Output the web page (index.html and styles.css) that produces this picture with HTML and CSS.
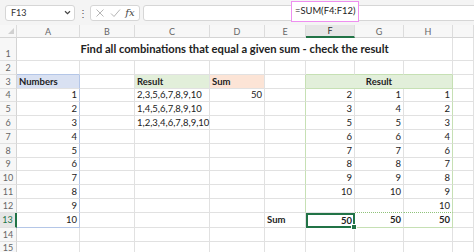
FILE: index.html
```html
<!DOCTYPE html>
<html lang="en">
<head>
  <meta charset="UTF-8">
  <title>Find all combinations that equal a given sum</title>
  <link rel="stylesheet" href="styles.css">
</head>
<body>
  <div class="formula-bar">
    <div class="name-box">
      <span>F13</span>
      <svg class="chevron" width="7" height="5" viewBox="0 0 7 5"><path d="M1 1.2 L3.5 3.6 L6 1.2" fill="none" stroke="#444" stroke-width="1.2"/></svg>
    </div>
    <div class="dots">⋮</div>
    <div class="fx-buttons">
      <svg width="10" height="10" viewBox="0 0 10 10"><path d="M1.5 1.5 L8.5 8.5 M8.5 1.5 L1.5 8.5" stroke="#b5b5b5" stroke-width="1"/></svg>
      <svg width="11" height="10" viewBox="0 0 11 10"><path d="M1 5.5 L4 8.5 L10 1.5" fill="none" stroke="#b5b5b5" stroke-width="1"/></svg>
      <span class="fx">fx</span>
    </div>
    <div class="formula-input">
      <span class="formula">=SUM(F4:F12)</span>
    </div>
  </div>

  <table class="sheet">
    <colgroup>
      <col class="c-hdr"><col class="c-a"><col class="c-b"><col class="c-c"><col class="c-d">
      <col class="c-e"><col class="c-f"><col class="c-g"><col class="c-h"><col class="c-i">
    </colgroup>
    <tr class="col-heads">
      <th class="corner"><svg width="8" height="8" viewBox="0 0 8 8"><path d="M7 1 L7 7 L1 7 Z" fill="#d0d0d0"/></svg></th>
      <th>A</th><th>B</th><th>C</th><th>D</th><th>E</th><th class="active">F</th><th>G</th><th>H</th><th></th>
    </tr>
    <tr class="r-title">
      <th class="rh">1</th>
      <td colspan="8" class="title">Find all combinations that equal a given sum - check the result</td>
      <td></td>
    </tr>
    <tr>
      <th class="rh">2</th>
      <td class="above-num"></td><td></td><td></td><td></td><td></td><td class="above-res"></td><td class="above-res"></td><td class="above-res"></td><td></td>
    </tr>
    <tr>
      <th class="rh">3</th>
      <td class="num head-blue">Numbers</td><td></td>
      <td class="head-green">Result</td><td class="head-peach">Sum</td><td class="before-res"></td>
      <td colspan="3" class="res-head">Result</td><td></td>
    </tr>
    <tr>
      <th class="rh">4</th>
      <td class="num r">1</td><td></td><td>2,3,5,6,7,8,9,10</td><td class="r">50</td><td class="before-res"></td>
      <td class="r res-l">2</td><td class="r">1</td><td class="r res-r">1</td><td></td>
    </tr>
    <tr>
      <th class="rh">5</th>
      <td class="num r">2</td><td></td><td>1,4,5,6,7,8,9,10</td><td></td><td class="before-res"></td>
      <td class="r res-l">3</td><td class="r">4</td><td class="r res-r">2</td><td></td>
    </tr>
    <tr>
      <th class="rh">6</th>
      <td class="num r">3</td><td></td><td>1,2,3,4,6,7,8,9,10</td><td></td><td class="before-res"></td>
      <td class="r res-l">5</td><td class="r">5</td><td class="r res-r">3</td><td></td>
    </tr>
    <tr>
      <th class="rh">7</th>
      <td class="num r">4</td><td></td><td></td><td></td><td class="before-res"></td>
      <td class="r res-l">6</td><td class="r">6</td><td class="r res-r">4</td><td></td>
    </tr>
    <tr>
      <th class="rh">8</th>
      <td class="num r">5</td><td></td><td></td><td></td><td class="before-res"></td>
      <td class="r res-l">7</td><td class="r">7</td><td class="r res-r">6</td><td></td>
    </tr>
    <tr>
      <th class="rh">9</th>
      <td class="num r">6</td><td></td><td></td><td></td><td class="before-res"></td>
      <td class="r res-l">8</td><td class="r">8</td><td class="r res-r">7</td><td></td>
    </tr>
    <tr>
      <th class="rh">10</th>
      <td class="num r">7</td><td></td><td></td><td></td><td class="before-res"></td>
      <td class="r res-l">9</td><td class="r">9</td><td class="r res-r">8</td><td></td>
    </tr>
    <tr>
      <th class="rh">11</th>
      <td class="num r">8</td><td></td><td></td><td></td><td class="before-res"></td>
      <td class="r res-l">10</td><td class="r">10</td><td class="r res-r">9</td><td></td>
    </tr>
    <tr>
      <th class="rh">12</th>
      <td class="num r">9</td><td></td><td></td><td></td><td class="before-res"></td>
      <td class="res-l"></td><td class="dotted-b"></td><td class="r res-r dotted-b">10</td><td></td>
    </tr>
    <tr>
      <th class="rh active">13</th>
      <td class="num num-last r">10</td><td></td><td></td><td></td><td class="b">Sum</td>
      <td class="r b selected">50<span class="handle"></span></td><td class="r b res-last">50</td><td class="r b res-r res-last">50</td><td></td>
    </tr>
    <tr>
      <th class="rh">14</th>
      <td></td><td></td><td></td><td></td><td></td><td></td><td></td><td></td><td></td>
    </tr>
    <tr>
      <th class="rh">15</th>
      <td></td><td></td><td></td><td></td><td></td><td></td><td></td><td></td><td></td>
    </tr>
  </table>
</body>
</html>
```

FILE: styles.css
```css
body {
  margin: 0;
  width: 474px;
  height: 252px;
  overflow: hidden;
  background: white;
  font-family: Lato, 'Liberation Sans', sans-serif;
  color: #222;
}

/* formula bar */

.formula-bar {
  height: 25px;
  background: #f4f4f4;
  display: flex;
  align-items: center;
  padding-left: 5px;
  box-sizing: border-box;
}

.name-box {
  width: 70px;
  height: 16px;
  box-sizing: border-box;
  background: white;
  border: 1px solid #d6d6d6;
  border-radius: 3px;
  display: flex;
  align-items: center;
  justify-content: space-between;
  padding: 0 3px 0 5px;
  font-size: 9px;
  color: #333;
}

.dots {
  width: 15px;
  text-align: center;
  font-size: 10px;
  color: #555;
}

.fx-buttons {
  width: 50px;
  height: 16px;
  box-sizing: border-box;
  background: white;
  border: 1px solid #d6d6d6;
  border-radius: 3px;
  display: flex;
  align-items: center;
  justify-content: space-around;
  padding: 0 2px;
}

.fx {
  font-family: 'DejaVu Serif', 'Liberation Serif', serif;
  font-style: italic;
  font-size: 10px;
  color: #444;
}

.formula-input {
  flex: 1;
  margin-left: 3px;
  margin-right: -6px;
  height: 16px;
  box-sizing: border-box;
  background: white;
  border: 1px solid #d6d6d6;
  border-radius: 3px;
  position: relative;
}

/* annotation drawn over the formula bar */
.formula {
  position: absolute;
  left: 147px;
  top: -5px;
  width: 68px;
  height: 21px;
  box-sizing: border-box;
  border: 1.5px solid #ee8ff0;
  background: white;
  font-size: 9.4px;
  line-height: 18px;
  padding-left: 3px;
  color: #222;
}

/* sheet */

.sheet {
  border-collapse: separate;
  border-spacing: 0;
  table-layout: fixed;
  width: 474px;
}

.c-hdr { width: 17px; }
.c-a { width: 63px; }
.c-b { width: 55px; }
.c-c { width: 75px; }
.c-d { width: 55px; }
.c-e { width: 41px; }
.c-f { width: 49px; }
.c-g { width: 49px; }
.c-h { width: 49px; }
.c-i { width: 21px; }

.sheet tr { height: 13.8px; }
.sheet tr.col-heads { height: 12px; }
.sheet tr.r-title { height: 23px; }

.sheet td, .sheet th {
  padding: 0 2px;
  border-right: 1px solid #e1e1e1;
  border-bottom: 1px solid #e1e1e1;
  font-size: 9.5px;
  line-height: 11px;
  white-space: nowrap;
  overflow: visible;
  vertical-align: middle;
}

.sheet .col-heads th {
  background: #f7f7f7;
  font-weight: normal;
  color: #666;
  font-size: 9px;
  border-right-color: #dcdcdc;
  border-bottom-color: #d4d4d4;
}

.sheet .col-heads th.active {
  background: #e6e6e6;
  border-bottom: 2px solid #217346;
  color: #333;
}

.sheet .corner {
  text-align: right;
  padding: 0 1px;
}

.corner svg { display: block; margin-left: auto; }

.sheet .rh {
  background: #f7f7f7;
  font-weight: normal;
  color: #666;
  font-size: 9px;
  text-align: center;
  padding: 0;
  border-right-color: #d4d4d4;
}

.sheet .r-title .rh {
  vertical-align: bottom;
  padding-bottom: 1px;
}

.sheet .rh.active {
  background: #e6e6e6;
  color: #217346;
  border-right: 2px solid #217346;
}

.sheet .title {
  font-weight: bold;
  text-align: center;
  font-size: 11.2px;
  padding-bottom: 2px;
}

.r { text-align: right; }
.b { font-weight: bold; }

/* Numbers column, outlined in blue */
.sheet .num { border-right-color: #b4c6e7; }
.sheet .above-num { border-bottom-color: #b4c6e7; }
.sheet .num-last { border-bottom-color: #b4c6e7; }

.head-blue {
  background: #d9e1f2;
  font-weight: bold;
}

.head-green {
  background: #e2efda;
  font-weight: bold;
}

.head-peach {
  background: #fce4d6;
  font-weight: bold;
}

/* Result block F3:H13, outlined in green */
.sheet .above-res { border-bottom-color: #c6e0b4; }
.sheet .before-res { border-right-color: #c6e0b4; }

.sheet .res-head {
  background: #e2efda;
  font-weight: bold;
  text-align: center;
  border-right-color: #c6e0b4;
  border-bottom-color: #c6e0b4;
}

.sheet .res-r { border-right-color: #c6e0b4; }
.sheet .res-last { border-bottom-color: #c6e0b4; }

.sheet .dotted-b { border-bottom: 1px dotted #8fc27a; }

.sheet tr td.selected {
  position: relative;
  border: 2px solid #217346;
  padding-right: 1px;
}

.handle {
  position: absolute;
  right: -4px;
  bottom: -4px;
  width: 4px;
  height: 4px;
  background: #217346;
  border: 1px solid white;
}
```
